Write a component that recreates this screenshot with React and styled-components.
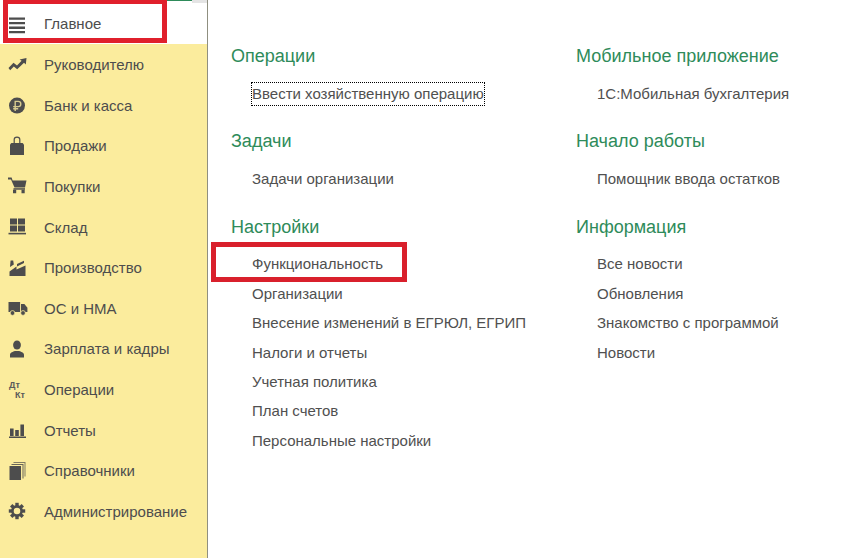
import React from 'react';
import styled, { createGlobalStyle } from 'styled-components';

const GlobalStyle = createGlobalStyle`
  html, body {
    margin: 0;
    padding: 0;
    background: #fff;
    font-family: "Liberation Sans", Arial, sans-serif;
  }
`;

const Svg = ({ children }) => (
  <svg width="20" height="20" viewBox="0 0 20 20" fill="#4d4d4d">{children}</svg>
);

const gearTeeth = [0, 45, 90, 135, 180, 225, 270, 315];

const icons = {
  main: (
    <Svg>
      <path d="M1 3.4h16v2.3H1zM1 8h16v2.3H1zM1 12.6h16v2.3H1zM1 17h16v2.2H1z" />
    </Svg>
  ),
  chief: (
    <Svg>
      <path d="M0.5 13 L5.5 7.8 L9 10.4 L13.6 5.8 L11.6 4.4 L18.5 3 L17.8 9.4 L16 7.8 L9.2 14.2 L5.8 11.6 L2.2 15.2 Z" />
    </Svg>
  ),
  bank: (
    <Svg>
      <circle cx="9" cy="10.6" r="8" />
      <path d="M7.2 16V6.4h3a2.6 2.6 0 0 1 0 5.2H5.2M5.2 13.8h5" fill="none" stroke="#d9cd90" strokeWidth="1.4" />
    </Svg>
  ),
  sales: (
    <Svg>
      <path d="M2 8.5L3.4 7h11.2L16 8.5V19H2z" />
      <path d="M6.2 9.5V3.6a2.8 2.4 0 0 1 5.6 0V9.5" fill="none" stroke="#4d4d4d" strokeWidth="1.2" />
    </Svg>
  ),
  buy: (
    <Svg>
      <path d="M0 1.5h3.6l1 3H18.5L17 11.5H6.5L3 3.4H0z" />
      <path d="M5.5 12.2h11.5v1.5H5.5z" />
      <path d="M5 13.7h3.2v3.6H5zM13.5 13.7h3.2v3.6h-3.2z" />
    </Svg>
  ),
  stock: (
    <Svg>
      <path d="M2 1.5h7v6H2zM10 1.5h7v6h-7zM2 8.4h7v6H2zM10 8.4h7v6h-7z" />
      <path d="M0.5 15.8h17.5v1.6H0.5z" />
    </Svg>
  ),
  factory: (
    <Svg>
      <path d="M2 9L2.6 2.5h2.6l.6 4z" />
      <path d="M9 6L16 2.8V5L9 8.4z" />
      <path d="M1.5 18V13.6L8.5 8.6v3L17.5 7.4V18z" />
    </Svg>
  ),
  truck: (
    <Svg>
      <path d="M0.5 4h11.6v10H0.5z" />
      <path d="M13 6h3.4l3 3.8V14H13z" />
      <circle cx="4.5" cy="15" r="2.4" stroke="#fbec9d" strokeWidth="0.8" />
      <circle cx="15" cy="15" r="2.4" stroke="#fbec9d" strokeWidth="0.8" />
    </Svg>
  ),
  person: (
    <Svg>
      <ellipse cx="9" cy="6" rx="3.9" ry="4.6" />
      <path d="M2 18.5v-2.8c0-2.2 3.2-3.2 4.8-3.8h4.4c1.6.6 4.8 1.6 4.8 3.8v2.8z" />
    </Svg>
  ),
  ops: (
    <Svg>
      <text x="1" y="7.5" fontFamily="Liberation Sans" fontSize="9" fontWeight="700" fill="#5a5a5a">Дт</text>
      <text x="7" y="17.5" fontFamily="Liberation Sans" fontSize="9" fontWeight="700" fill="#5a5a5a">Кт</text>
    </Svg>
  ),
  reports: (
    <Svg>
      <path d="M2 8.5h3.6V16H2zM7.2 10h3.6v6H7.2zM12.4 4.5H16V16h-3.6z" />
      <path d="M1 16.5h17V18H1z" />
    </Svg>
  ),
  refs: (
    <Svg>
      <path d="M5.5 1h12v14.5h-1V2h-11z" opacity="0.7" />
      <path d="M3.5 3h12v14.5h-1V4h-11z" opacity="0.85" />
      <path d="M1.5 5h11.5v14H1.5z" />
    </Svg>
  ),
  admin: (
    <Svg>
      <g transform="translate(9 10)">
        {gearTeeth.map((deg) => (
          <rect key={deg} x="-1.7" y="-8.2" width="3.4" height="4" transform={`rotate(${deg})`} />
        ))}
        <circle r="4.6" fill="none" stroke="#4d4d4d" strokeWidth="2.6" />
      </g>
    </Svg>
  ),
};

const menu = [
  ['chief', 'Руководителю'],
  ['bank', 'Банк и касса'],
  ['sales', 'Продажи'],
  ['buy', 'Покупки'],
  ['stock', 'Склад'],
  ['factory', 'Производство'],
  ['truck', 'ОС и НМА'],
  ['person', 'Зарплата и кадры'],
  ['ops', 'Операции'],
  ['reports', 'Отчеты'],
  ['refs', 'Справочники'],
  ['admin', 'Администрирование'],
];

const leftColumn = [
  { title: 'Операции', links: [{ text: 'Ввести хозяйственную операцию', focused: true }] },
  { title: 'Задачи', links: [{ text: 'Задачи организации' }] },
  {
    title: 'Настройки',
    links: [
      { text: 'Функциональность', marked: true },
      { text: 'Организации' },
      { text: 'Внесение изменений в ЕГРЮЛ, ЕГРИП' },
      { text: 'Налоги и отчеты' },
      { text: 'Учетная политика' },
      { text: 'План счетов' },
      { text: 'Персональные настройки' },
    ],
  },
];

const rightColumn = [
  { title: 'Мобильное приложение', links: [{ text: '1С:Мобильная бухгалтерия' }] },
  { title: 'Начало работы', links: [{ text: 'Помощник ввода остатков' }] },
  {
    title: 'Информация',
    links: [
      { text: 'Все новости' },
      { text: 'Обновления' },
      { text: 'Знакомство с программой' },
      { text: 'Новости' },
    ],
  },
];

const Section = ({ title, links }) => (
  <Group>
    <Heading>{title}</Heading>
    {links.map((link) => (
      <LinkRow key={link.text}>
        <LinkText $focused={link.focused}>{link.text}</LinkText>
        {link.marked && <LinkMark />}
      </LinkRow>
    ))}
  </Group>
);

const App = () => {
  return (
    <Page>
      <GlobalStyle />
      <Sidebar>
        <TopStrip>
          <GreenLine />
          <GreyCorner />
        </TopStrip>
        <MainItem>
          <IconBox>{icons.main}</IconBox>
          <ItemLabel>Главное</ItemLabel>
          <MainMark />
        </MainItem>
        <Menu>
          {menu.map(([icon, label]) => (
            <MenuItem key={label}>
              <IconBox>{icons[icon]}</IconBox>
              <ItemLabel>{label}</ItemLabel>
            </MenuItem>
          ))}
        </Menu>
      </Sidebar>
      <Content>
        <Column $width="345px">
          {leftColumn.map((s) => (
            <Section key={s.title} {...s} />
          ))}
        </Column>
        <Column $width="260px">
          {rightColumn.map((s) => (
            <Section key={s.title} {...s} />
          ))}
        </Column>
      </Content>
    </Page>
  );
};

export default App;

const Page = styled.div`
  display: flex;
  width: 847px;
  height: 558px;
  overflow: hidden;
  background: #fff;
`;

const Sidebar = styled.aside`
  flex: 0 0 207px;
  display: flex;
  flex-direction: column;
  background: #fbec9d;
  border-right: 1px solid #8f8f80;
`;

const TopStrip = styled.div`
  display: flex;
  justify-content: flex-end;
  align-items: flex-start;
  height: 3.73px;
  background: #fff;
`;

const GreenLine = styled.div`
  width: 186px;
  height: 1px;
  background: #2e8b5a;
`;

const GreyCorner = styled.div`
  width: 15px;
  height: 3px;
  background: #e4e4e4;
`;

const MenuItem = styled.div`
  display: flex;
  align-items: center;
  box-sizing: border-box;
  height: 40.62px;
  padding-left: 8px;
`;

const MainItem = styled(MenuItem)`
  position: relative;
  padding-bottom: 1px;
  background: #fff;
`;

const MainMark = styled.div`
  position: absolute;
  left: 3px;
  top: -4px;
  width: 164px;
  height: 43px;
  box-sizing: border-box;
  border: 5px solid #e0202c;
  border-top-width: 4px;
`;

const Menu = styled.nav`
  display: flex;
  flex-direction: column;
`;

const IconBox = styled.span`
  display: flex;
  width: 20px;
  height: 20px;
  margin-right: 16px;
`;

const ItemLabel = styled.span`
  font-size: 15px;
  color: #4d4d4d;
  white-space: nowrap;
`;

const Content = styled.main`
  display: flex;
  padding: 42px 0 0 23px;
`;

const Column = styled.div`
  width: ${({ $width }) => $width};
  display: flex;
  flex-direction: column;
  gap: 19px;
`;

const Group = styled.section`
  display: flex;
  flex-direction: column;
`;

const Heading = styled.h2`
  margin: 0 0 8.875px;
  height: 28px;
  line-height: 28px;
  font-size: 18px;
  font-weight: 400;
  color: #2e8b5a;
  white-space: nowrap;
`;

const LinkRow = styled.div`
  position: relative;
  display: flex;
  align-items: center;
  height: 29.45px;
  padding-left: 21px;
`;

const LinkText = styled.span`
  font-size: 15px;
  line-height: 22px;
  color: #505050;
  white-space: nowrap;
  outline: ${({ $focused }) => ($focused ? '1px dotted #000' : 'none')};
`;

const LinkMark = styled.div`
  position: absolute;
  left: -20px;
  top: -7.4px;
  width: 196px;
  height: 40px;
  box-sizing: border-box;
  border: 5px solid #d9202c;
`;
